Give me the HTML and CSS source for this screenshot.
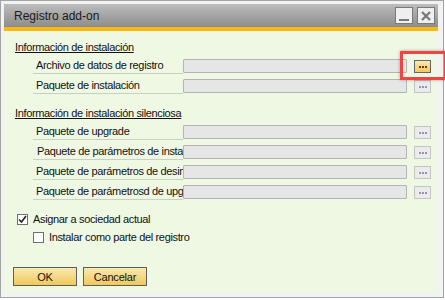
FILE: index.html
```html
<!DOCTYPE html>
<html lang="es">
<head>
    <meta charset="UTF-8">
    <title>Registro add-on</title>
    <link rel="stylesheet" href="styles.css">
</head>
<body>
    <div class="window">
        <div class="titlebar">
            <span class="title">Registro add-on</span>
            <div class="win-buttons">
                <span class="win-btn"><svg width="12" height="12" viewBox="0 0 12 12"><rect x="1" y="9" width="10" height="2" fill="#7a7a7a"/></svg></span>
                <span class="win-btn"><svg width="12" height="12" viewBox="0 0 12 12"><path d="M2 2 L10 10 M10 2 L2 10" stroke="#7a7a7a" stroke-width="2.4"/></svg></span>
            </div>
        </div>
        <div class="content">
            <div class="section-title">Información de instalación</div>
            <div class="row">
                <div class="label">Archivo de datos de registro</div>
                <div class="field"></div>
                <span class="browse active highlight"><svg width="15" height="10" viewBox="0 0 15 10"><rect x="4" y="5" width="2" height="2"/><rect x="7" y="5" width="2" height="2"/><rect x="10" y="5" width="2" height="2"/></svg></span>
            </div>
            <div class="row">
                <div class="label">Paquete de instalación</div>
                <div class="field"></div>
                <span class="browse"><svg width="15" height="10" viewBox="0 0 15 10"><rect x="4" y="5" width="2" height="2"/><rect x="7" y="5" width="2" height="2"/><rect x="10" y="5" width="2" height="2"/></svg></span>
            </div>

            <div class="section-title second">Información de instalación silenciosa</div>
            <div class="row">
                <div class="label">Paquete de upgrade</div>
                <div class="field"></div>
                <span class="browse"><svg width="15" height="10" viewBox="0 0 15 10"><rect x="4" y="5" width="2" height="2"/><rect x="7" y="5" width="2" height="2"/><rect x="10" y="5" width="2" height="2"/></svg></span>
            </div>
            <div class="row">
                <div class="label shifted">Paquete de parámetros de instalación</div>
                <div class="field"></div>
                <span class="browse"><svg width="15" height="10" viewBox="0 0 15 10"><rect x="4" y="5" width="2" height="2"/><rect x="7" y="5" width="2" height="2"/><rect x="10" y="5" width="2" height="2"/></svg></span>
            </div>
            <div class="row">
                <div class="label">Paquete de parámetros de desinstalación</div>
                <div class="field"></div>
                <span class="browse"><svg width="15" height="10" viewBox="0 0 15 10"><rect x="4" y="5" width="2" height="2"/><rect x="7" y="5" width="2" height="2"/><rect x="10" y="5" width="2" height="2"/></svg></span>
            </div>
            <div class="row">
                <div class="label">Paquete de parámetrosd de upgrade</div>
                <div class="field"></div>
                <span class="browse"><svg width="15" height="10" viewBox="0 0 15 10"><rect x="4" y="5" width="2" height="2"/><rect x="7" y="5" width="2" height="2"/><rect x="10" y="5" width="2" height="2"/></svg></span>
            </div>

            <div class="check first">
                <span class="box"><svg width="9" height="9" viewBox="0 0 9 9"><path d="M1 4.5 L3.5 7 L8 1" stroke="#222" stroke-width="1.6" fill="none"/></svg></span>
                <span>Asignar a sociedad actual</span>
            </div>
            <div class="check sub">
                <span class="box"></span>
                <span>Instalar como parte del registro</span>
            </div>

            <div class="actions">
                <button class="btn">OK</button>
                <button class="btn">Cancelar</button>
            </div>
        </div>
    </div>
</body>
</html>
```

FILE: styles.css
```css
body {
    margin: 0;
    background-color: #fff;
    font-family: 'Liberation Sans', Arial, sans-serif;
    font-size: 11px;
    letter-spacing: -0.35px;
    color: #111;
}
.window {
    width: 434px;
    height: 288px;
    border: 1px solid #a4a4a4;
    padding: 3px 5px 5px 3px;
    background-color: #f2f2f2;
    display: flex;
    flex-direction: column;
}
.titlebar {
    height: 23px;
    background: linear-gradient(#bdbdbd, #8c8c8c);
    border-bottom: 4px solid #f7b911;
    display: flex;
    align-items: center;
    justify-content: space-between;
    padding: 0 3px 0 10px;
}
.title {
    font-size: 12px;
    letter-spacing: 0;
    color: #1a1a1a;
}
.win-buttons {
    display: flex;
    gap: 4px;
}
.win-btn {
    width: 16px;
    height: 15px;
    border: 1px solid #7a7a7a;
    background-color: #efefef;
    display: flex;
    align-items: center;
    justify-content: center;
}
.content {
    flex: 1;
    background-color: #eff8e3;
    padding: 9px 0 0 11px;
}
.section-title {
    text-decoration: underline;
    height: 14px;
    line-height: 14px;
    margin-bottom: 2px;
}
.section-title.second {
    margin-top: 10px;
    margin-bottom: 2px;
}
.row {
    display: flex;
    align-items: center;
    height: 20px;
    padding-left: 18px;
}
.label {
    width: 147px;
    padding-left: 3px;
    height: 14px;
    line-height: 13px;
    border-bottom: 1px solid #c9cfc3;
    white-space: nowrap;
    overflow: hidden;
}
.label.shifted {
    padding-left: 4px;
    width: 146px;
}
.field {
    width: 222px;
    height: 12px;
    border: 1px solid #b4b4b4;
    background-color: #e6e6e6;
    border-radius: 1px;
}
.browse {
    margin-left: 7px;
    width: 15px;
    height: 11px;
    border: 1px solid #c4c4c4;
    background-color: #ebebeb;
    fill: #9c8fb0;
    display: flex;
}
.browse.active {
    border-color: #666;
    background: linear-gradient(#fbeaaa, #f0ca5c);
    fill: #7a2e2e;
}
.highlight {
    position: relative;
}
.highlight::after {
    content: "";
    position: absolute;
    top: -10px;
    bottom: -8px;
    left: -15px;
    right: -17px;
    border: 3px solid #f04545;
    box-shadow: 0 0 3px rgba(0, 0, 0, 0.35);
}
.check {
    display: flex;
    align-items: center;
    gap: 5px;
    height: 18px;
}
.check.first {
    margin-top: 8px;
    padding-left: 2px;
}
.check.sub {
    padding-left: 18px;
}
.box {
    width: 9px;
    height: 9px;
    border: 1px solid #707070;
    background-color: #fff;
    display: flex;
    align-items: center;
    justify-content: center;
}
.actions {
    display: flex;
    gap: 6px;
    margin-top: 21px;
    margin-left: -2px;
}
.btn {
    width: 64px;
    height: 19px;
    border: 1px solid #5e5e5e;
    background: linear-gradient(#f9e8b0, #f0c95a);
    font-family: 'Liberation Sans', Arial, sans-serif;
    font-size: 11px;
    letter-spacing: -0.2px;
    color: #111;
    padding: 0;
}
```
